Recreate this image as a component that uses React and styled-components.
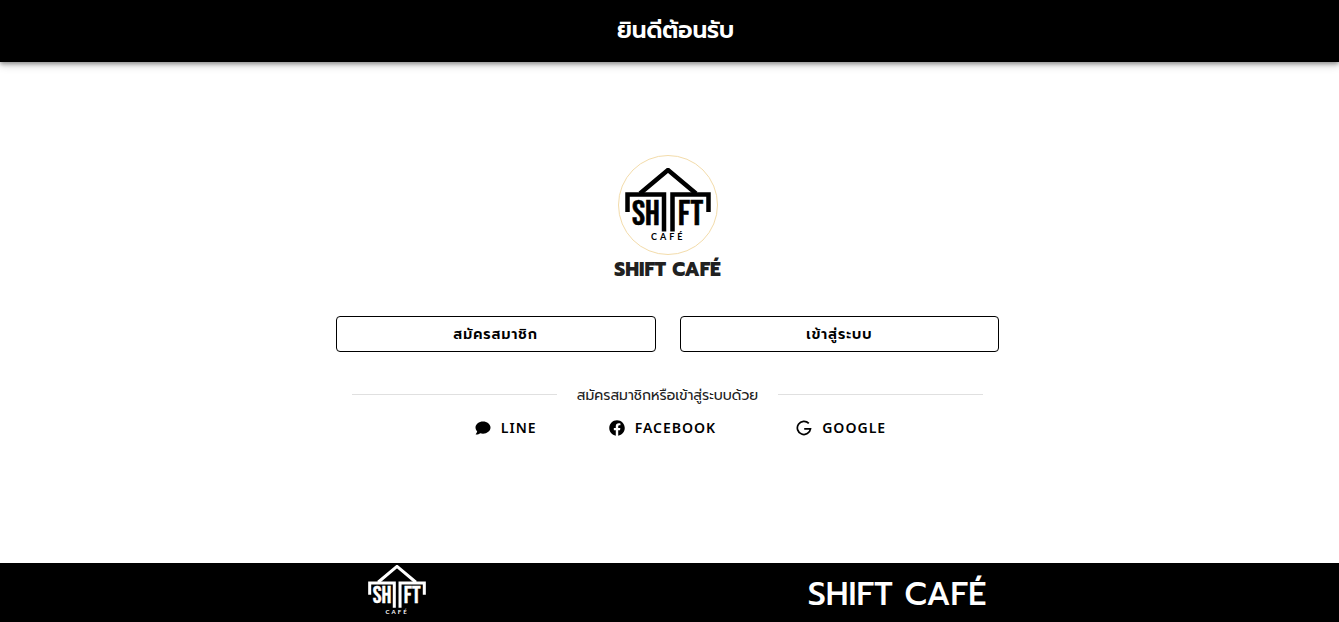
import React from "react";
import styled, { createGlobalStyle } from "styled-components";

const GlobalStyle = createGlobalStyle`
  * { box-sizing: border-box; }
  body {
    margin: 0;
    background: #fff;
    color: #212121;
    font-family: Prompt, "Noto Sans", sans-serif;
  }
`;

const Page = styled.div`
  min-height: 100vh;
  display: flex;
  flex-direction: column;
`;

const Header = styled.header`
  display: flex;
  align-items: center;
  justify-content: center;
  height: 62px;
  padding-left: 12px;
  background: #000;
  color: #fff;
  box-shadow: 0 2px 4px rgba(0, 0, 0, 0.35), 0 4px 8px rgba(0, 0, 0, 0.14);
`;

const Title = styled.h1`
  margin: 0;
  font-size: 23px;
  line-height: 34px;
  font-weight: 600;
`;

const Main = styled.main`
  flex: 1;
  width: 50%;
  min-width: 320px;
  padding: 93px 5px 0 1px;
  margin: 0 auto;
`;

const Brand = styled.div`
  display: flex;
  flex-direction: column;
  align-items: center;
`;

const Badge = styled.div`
  display: flex;
  align-items: center;
  justify-content: center;
  width: 100px;
  height: 100px;
  border: 1px solid #f3dcab;
  border-radius: 50%;
  color: #000;
`;

const BrandName = styled.h2`
  margin: 0;
  font-size: 19px;
  line-height: 30px;
  font-weight: 800;
`;

const Actions = styled.div`
  display: grid;
  grid-template-columns: 1fr 1fr;
  gap: 24px;
  margin-top: 31px;
`;

const OutlineButton = styled.button`
  height: 36px;
  border: 1px solid #000;
  border-radius: 4px;
  background: #fff;
  color: #000;
  font: inherit;
  font-size: 14px;
  font-weight: 600;
  letter-spacing: 1px;
  cursor: pointer;
`;

const Divider = styled.div`
  display: flex;
  align-items: center;
  gap: 20px;
  margin: 33px 16px 0;
  font-size: 14px;
  line-height: 22px;

  &::before,
  &::after {
    content: "";
    flex: 1;
    height: 1px;
    margin-bottom: 3px;
    background: #e0e0e0;
  }
`;

const Socials = styled.div`
  display: flex;
  justify-content: center;
  margin-top: 3px;
  padding-left: 26px;
`;

const SocialButton = styled.button`
  display: flex;
  align-items: center;
  gap: 10px;
  height: 36px;
  margin-right: ${(p) => p.$gap}px;
  padding: 0;
  border: 0;
  background: none;
  color: #000;
  font-family: "Noto Sans Thai", "Noto Sans", sans-serif;
  font-size: 14px;
  font-weight: 600;
  letter-spacing: 1px;
  cursor: pointer;
`;

const Footer = styled.footer`
  display: grid;
  grid-template-columns: 1fr 1fr;
  justify-items: center;
  height: 59px;
  padding: 0 192px 0 147px;
  background: #000;
  color: #fff;
`;

const FooterMark = styled.div`
  padding-top: 2px;
`;

const FooterName = styled.div`
  font-size: 32px;
  line-height: 64px;
  font-weight: 500;
`;

function ShiftMark({ width, height }) {
  return (
    <svg width={width} height={height} viewBox="7 13 86 74" fill="none" stroke="currentColor" role="img" aria-label="Shift Café">
      <path d="M22 38.500 50 15l28 23.500" strokeWidth="4.500" />
      <path d="M9.500 57V39.500H46v37M54.500 76.500V39.500H90.500v17.500" strokeWidth="4.500" />
      <g fill="currentColor" stroke="currentColor" strokeWidth="0.600" fontFamily="'Bebas Neue', Oswald, 'Liberation Sans', sans-serif" fontWeight="400">
        <text x="14" y="70" fontSize="35">SH</text>
        <text x="60" y="70" fontSize="35">FT</text>
      </g>
      <text x="33" y="85" fill="currentColor" stroke="none" fontFamily="Lato, sans-serif" fontSize="9" fontWeight="700" letterSpacing="3">CAFÉ</text>
    </svg>
  );
}

const BubbleIcon = () => (
  <svg width="16" height="16" viewBox="0 0 16 16" fill="currentColor" aria-hidden="true">
    <path d="M8 1.500C3.900 1.500.5 4.200.5 7.600c0 1.500.6 2.800 1.700 3.900-.4 1.400-1.500 2.600-1.500 2.600-.1.200 0 .5.300.5 1.900 0 3.400-.9 4.100-1.400 1 .3 1.900.5 2.900.5 4.100 0 7.500-2.700 7.500-6.100S12.100 1.500 8 1.500Z" />
  </svg>
);

const FacebookIcon = () => (
  <svg width="16" height="16" viewBox="0 0 512 512" fill="currentColor" aria-hidden="true">
    <path d="M504 256C504 119 393 8 256 8S8 119 8 256c0 123.780 90.690 226.380 209.250 245V327.690h-63V256h63v-54.640c0-62.150 37-96.480 93.670-96.480 27.140 0 55.520 4.840 55.520 4.840v61h-31.280c-30.800 0-40.410 19.120-40.410 38.730V256h68.780l-11 71.690h-57.780V501C413.310 482.380 504 379.780 504 256Z" />
  </svg>
);

const GoogleIcon = () => (
  <svg width="16" height="16" viewBox="0 0 16 16" fill="none" stroke="currentColor" strokeWidth="1.700" aria-hidden="true">
    <path d="M12.800 3.400A6.600 6.600 0 1 0 14.500 8.800H8.200" />
  </svg>
);

export default function App() {
  return (
    <Page>
      <GlobalStyle />
      <Header>
        <Title>ยินดีต้อนรับ</Title>
      </Header>
      <Main>
        <Brand>
          <Badge>
            <ShiftMark width={86} height={74} />
          </Badge>
          <BrandName>SHIFT CAFÉ</BrandName>
        </Brand>
        <Actions>
          <OutlineButton type="button">สมัครสมาชิก</OutlineButton>
          <OutlineButton type="button">เข้าสู่ระบบ</OutlineButton>
        </Actions>
        <Divider>สมัครสมาชิกหรือเข้าสู่ระบบด้วย</Divider>
        <Socials>
          <SocialButton type="button" $gap={72}><BubbleIcon />LINE</SocialButton>
          <SocialButton type="button" $gap={80}><FacebookIcon />FACEBOOK</SocialButton>
          <SocialButton type="button" $gap={0}><GoogleIcon />GOOGLE</SocialButton>
        </Socials>
      </Main>
      <Footer>
        <FooterMark>
          <ShiftMark width={58} height={50} />
        </FooterMark>
        <FooterName>SHIFT CAFÉ</FooterName>
      </Footer>
    </Page>
  );
}
